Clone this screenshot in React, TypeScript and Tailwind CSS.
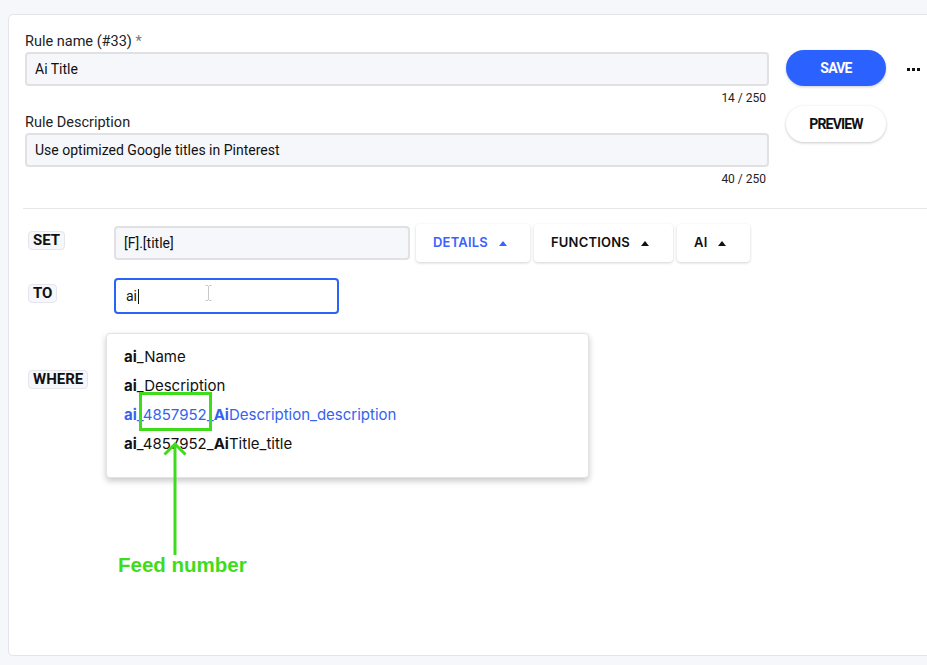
import React from "react";

const roboto = { fontFamily: "Roboto, 'Liberation Sans', sans-serif" };
const inter = { fontFamily: "Inter, 'Liberation Sans', sans-serif" };

function CaretUp({ color }: { color: string }) {
  return (
    <svg width="8" height="5" viewBox="0 0 8 5" className="shrink-0">
      <polygon points="4,0 8,5 0,5" fill={color} />
    </svg>
  );
}

function Badge({ children }: { children: React.ReactNode }) {
  return (
    <span
      className="flex h-[19px] items-center rounded-[4px] border border-[#e4e6ec] bg-[#f6f7fb] px-[4px] text-[15px] font-bold leading-none text-[#111]"
      style={roboto}
    >
      {children}
    </span>
  );
}

function MenuButton({
  label,
  color,
  width,
}: {
  label: string;
  color: string;
  width: string;
}) {
  return (
    <button
      className={`flex h-[38px] ${width} items-center gap-[11px] rounded-[4px] bg-white pl-[17px] text-[13px] font-semibold tracking-[0.2px] shadow-[0_1px_3px_rgba(0,0,0,0.18)]`}
      style={{ ...inter, color }}
    >
      <span>{label}</span>
      <CaretUp color={color} />
    </button>
  );
}

function Field({
  label,
  required,
  value,
  count,
}: {
  label: string;
  required?: boolean;
  value: string;
  count: string;
}) {
  return (
    <div className="flex flex-col">
      <div className="h-[16px] text-[14.5px] leading-[16px] text-[#222]" style={roboto}>
        {label}
        {required && <span className="text-[#777]"> *</span>}
      </div>
      <div
        className="mt-[2px] flex h-[34px] items-center rounded-[4px] border-2 border-[#e1e1e3] bg-[#f6f7fb] pl-[8px] text-[14px] text-[#111]"
        style={roboto}
      >
        {value}
      </div>
      <div
        className="mt-[4px] h-[16px] pr-[3px] text-right text-[12px] leading-[16px] text-[#222]"
        style={roboto}
      >
        {count}
      </div>
    </div>
  );
}

const items: { head: string; mid: string; bold?: string; tail: string; active?: boolean }[] = [
  { head: "ai", mid: "_Name", tail: "" },
  { head: "ai", mid: "_Description", tail: "" },
  { head: "ai", mid: "_4857952_", bold: "Ai", tail: "Description_description", active: true },
  { head: "ai", mid: "_4857952_", bold: "Ai", tail: "Title_title" },
];

export default function App() {
  return (
    <div className="h-[665px] w-[927px] overflow-hidden bg-[#f6f7fb] pt-[14px]">
      <div className="relative ml-[8px] h-[642px] w-[940px] rounded-[5px] border border-[#e3e5ea] bg-white">
        {/* name + description, with actions */}
        <div className="flex items-start pl-[16px] pt-[19px]">
          <div className="flex w-[744px] flex-col gap-[9px]">
            <Field label="Rule name (#33)" required value="Ai Title" count="14 / 250" />
            <Field
              label="Rule Description"
              value="Use optimized Google titles in Pinterest"
              count="40 / 250"
            />
          </div>
          <div className="ml-[17px] mt-[16px] flex flex-col gap-[20px]">
            <button
              className="h-[36px] w-[100px] rounded-full bg-[#2b61ff] text-[14px] font-bold tracking-[-0.8px] text-white shadow-[0_1px_3px_rgba(0,0,0,0.2)]"
              style={roboto}
            >
              SAVE
            </button>
            <button
              className="h-[36px] w-[100px] rounded-full bg-white text-[14px] font-bold tracking-[-0.8px] text-[#111] shadow-[0_1px_3px_rgba(0,0,0,0.22)]"
              style={roboto}
            >
              PREVIEW
            </button>
          </div>
          <div className="ml-[21px] mt-[34px] flex gap-[2px]">
            <span className="h-[3px] w-[3px] bg-[#111]" />
            <span className="h-[3px] w-[3px] bg-[#111]" />
            <span className="h-[3px] w-[3px] bg-[#111]" />
          </div>
        </div>

        <div className="ml-[14px] mt-[21px] h-px bg-[#e6e7ea]" />

        {/* SET row */}
        <div className="mt-[15px] flex items-start pl-[19px]">
          <div className="flex w-[86px] pt-[7px]">
            <Badge>SET</Badge>
          </div>
          <div
            className="mt-[2px] flex h-[34px] w-[296px] items-center rounded-[4px] border-2 border-[#e1e1e3] bg-[#f6f7fb] pl-[8px] text-[14px] text-[#111]"
            style={roboto}
          >
            [F].[title]
          </div>
          <div className="ml-[6px] flex gap-[4px]">
            <MenuButton label="DETAILS" color="#3b62ff" width="w-[114px]" />
            <MenuButton label="FUNCTIONS" color="#111" width="w-[139px]" />
            <MenuButton label="AI" color="#111" width="w-[73px]" />
          </div>
        </div>

        {/* TO row */}
        <div className="mt-[16px] flex items-start pl-[19px]">
          <div className="flex w-[86px] pt-[6px]">
            <Badge>TO</Badge>
          </div>
          <div
            className="relative flex h-[36px] w-[225px] items-center rounded-[4px] border-2 border-[#2b63f6] bg-white pl-[10px] text-[14px] text-[#111]"
            style={roboto}
          >
            <span>ai</span>
            <span className="ml-[1px] h-[15px] w-px bg-[#111]" />
            <svg
              width="7"
              height="16"
              viewBox="0 0 7 16"
              className="absolute left-[89px] top-[5px]"
            >
              <path d="M0.5 0.5h2.5M4 0.5h2.5M3.5 1v14M0.5 15.5h2.5M4 15.5h2.5" stroke="#c9c9cc" strokeWidth="1" fill="none" />
            </svg>
          </div>
        </div>

        {/* WHERE row */}
        <div className="mt-[56px] flex items-start pl-[19px]">
          <Badge>WHERE</Badge>
        </div>

        {/* suggestions menu */}
        <div
          className="absolute left-[97px] top-[318px] h-[145px] w-[483px] rounded-[4px] border border-[#e2e3e6] bg-white pt-[9px] shadow-[0_3px_6px_rgba(0,0,0,0.22)]"
          style={inter}
        >
          {items.map((it, i) => (
            <div
              key={i}
              className={`flex h-[29px] items-center pl-[17px] text-[15px] ${
                it.active ? "text-[#3463f0]" : "text-[#111]"
              }`}
            >
              <span className="font-bold">{it.head}</span>
              <span>{it.mid}</span>
              {it.bold && <span className="font-bold">{it.bold}</span>}
              <span>{it.tail}</span>
            </div>
          ))}
        </div>

        {/* feed number callout */}
        <div className="absolute left-[130px] top-[377px] h-[39px] w-[73px] border-[3px] border-[#3fdc1c]" />
        <svg
          width="30"
          height="116"
          viewBox="0 0 30 116"
          className="absolute left-[151px] top-[426px]"
        >
          <path d="M15 3V114" stroke="#3fdc1c" strokeWidth="3" fill="none" />
          <path d="M4.5 13.5L15 3L25.5 13.5" stroke="#3fdc1c" strokeWidth="3" fill="none" />
        </svg>
        <div
          className="absolute left-[109px] top-[538px] text-[20.5px] font-bold leading-[24px] text-[#3fdc1c]"
          style={{ fontFamily: "'Liberation Sans', Arial, sans-serif" }}
        >
          Feed number
        </div>
      </div>
    </div>
  );
}
